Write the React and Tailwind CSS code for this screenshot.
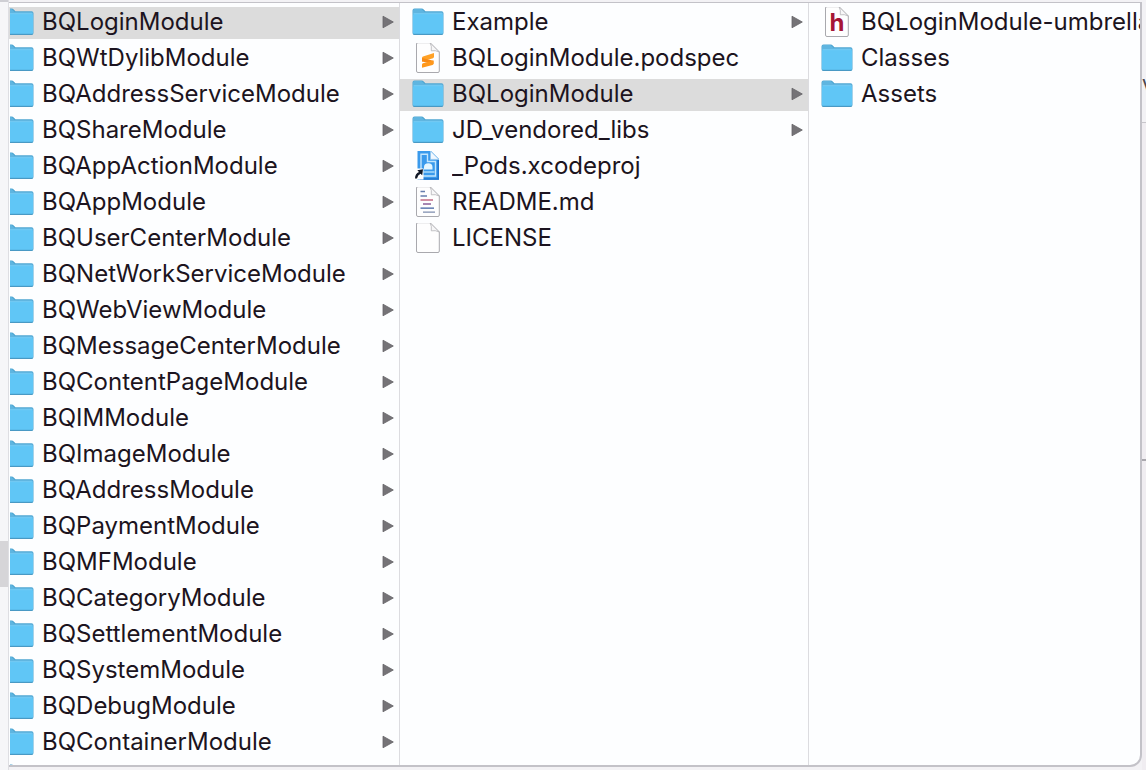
import React, { useState } from "react";

const modules = [
  "BQLoginModule",
  "BQWtDylibModule",
  "BQAddressServiceModule",
  "BQShareModule",
  "BQAppActionModule",
  "BQAppModule",
  "BQUserCenterModule",
  "BQNetWorkServiceModule",
  "BQWebViewModule",
  "BQMessageCenterModule",
  "BQContentPageModule",
  "BQIMModule",
  "BQImageModule",
  "BQAddressModule",
  "BQPaymentModule",
  "BQMFModule",
  "BQCategoryModule",
  "BQSettlementModule",
  "BQSystemModule",
  "BQDebugModule",
  "BQContainerModule",
].map((name) => ({ name, kind: "folder", open: true }));

const contents = [
  { name: "Example", kind: "folder", open: true },
  { name: "BQLoginModule.podspec", kind: "sublime" },
  { name: "BQLoginModule", kind: "folder", open: true },
  { name: "JD_vendored_libs", kind: "folder", open: true },
  { name: "_Pods.xcodeproj", kind: "xcode" },
  { name: "README.md", kind: "text" },
  { name: "LICENSE", kind: "blank" },
];

const sources = [
  { name: "BQLoginModule-umbrella.h", kind: "header" },
  { name: "Classes", kind: "folder" },
  { name: "Assets", kind: "folder" },
];

function FolderShape() {
  return (
    <>
      <path d="M0.5 25V2.5Q0.5 0.5 2.5 0.5H9.5Q11 0.5 12 1.7L13.5 3.3H29.5Q31.5 3.3 31.5 5.3V25Q31.5 27 29.5 27H2.5Q0.5 27 0.5 25Z" fill="#4fa6d2" />
      <path d="M1 6V2.7Q1 1 2.5 1H9.5L12.5 4H29.5Q31 4 31 5.5V6Z" fill="#5fb5e0" />
      <path d="M1 7Q1 5.7 2.5 5.7H29.5Q31 5.7 31 7V24.5Q31 26 29.5 26H2.5Q1 26 1 24.5Z" fill="#60c6f6" />
      <path d="M1.5 5.7H30.5" stroke="#7bd0f7" strokeWidth="0.8" />
      <path d="M1.5 26.3H30.5" stroke="#4593bb" strokeWidth="0.8" />
    </>
  );
}

function PageShape() {
  return (
    <>
      <path d="M4.5 2Q4.5 0.7 6 0.7H18L27.3 10V29Q27.3 30.5 26 30.5H6Q4.5 30.5 4.5 29Z" fill="#fefefe" stroke="#a9a9ae" strokeWidth="1" />
      <path d="M18 0.7Q20 4 19.3 8.8Q23.5 8 27.3 10Z" fill="#f7f7f8" stroke="#b4b4b8" strokeWidth="0.8" />
    </>
  );
}

function FileIcon({ kind, clipped }) {
  if (kind === "folder") {
    return (
      <svg viewBox={clipped ? "8 0 24 28" : "0 0 32 28"} className={clipped ? "h-7 w-6 shrink-0" : "h-7 w-8 shrink-0"} aria-hidden="true">
        <FolderShape />
      </svg>
    );
  }
  return (
    <svg viewBox="0 0 32 32" className="h-8 w-8 shrink-0" aria-hidden="true">
      {kind !== "xcode" && <PageShape />}
      {kind === "sublime" && (
        <>
          <path d="M10 16.2Q10 15 11 14.6L22 11V14.8Q22 15.8 21 16.2L10 19.5Z" fill="#ffa126" />
          <path d="M10 16L21.5 18.8V22L10 19.4Z" fill="#f88a14" />
          <path d="M21.5 18.6V21.4Q21.5 22.6 20.5 23L10 25.8V22.6Q10 21.6 11 21.3Z" fill="#ff981b" />
        </>
      )}
      {kind === "header" && (
        <text x="16" y="25" textAnchor="middle" fontSize="24" fontWeight="700" fill="#a51636">
          h
        </text>
      )}
      {kind === "text" && (
        <g fill="none" strokeWidth="1.3">
          <path d="M8.5 5.5H13M8.5 10H15" stroke="#667dad" />
          <path d="M8.5 14H21" stroke="#c26a85" />
          <path d="M11 18H19" stroke="#8a5f98" />
          <path d="M8.5 22.2H22" stroke="#3f5f9f" />
          <path d="M11 26.2H23" stroke="#7d8cae" />
        </g>
      )}
      {kind === "xcode" && (
        <>
          <path d="M5.5 1H19L27 9V29.8H5.5Z" fill="#3a9aec" />
          <path d="M26.2 10V29H8" fill="none" stroke="#1f74cc" strokeWidth="1.5" />
          <path d="M18.5 1L27 9.4H18.5Z" fill="#f1f8ff" stroke="#93c6ee" strokeWidth="0.8" />
          <path d="M9 4.3H15.5V11.5H23.5V26H9Z" fill="none" stroke="#c4e6fd" strokeWidth="1.4" />
          <path d="M12 19.5V17Q12 13.2 16.3 13.2Q20.5 13.2 20.5 17V19.5Z" fill="#e5f6ff" />
          <path d="M11.5 22H22.5" stroke="#a8dafb" strokeWidth="1.7" />
          <path d="M2.5 18.5H11.5V29.5H2.5Z" fill="#fff" />
          <path d="M3 28.5Q3 23.5 7 22L5.3 20.2L11 19.3L10.2 25.2L8.5 23.7Q5.8 25 5 28.5Z" fill="#111827" />
        </>
      )}
    </svg>
  );
}

function Row({ item, selected, onSelect, clipped }) {
  return (
    <li>
      <button
        type="button"
        aria-pressed={selected}
        onClick={onSelect}
        className={`flex h-8 w-full items-center gap-2 overflow-hidden pb-0.5 text-left ${clipped ? "pl-px" : "pl-3"} ${selected ? "bg-[#dcdcdc]" : ""}`}
      >
        <FileIcon kind={item.kind} clipped={clipped} />
        <span className="min-w-0 flex-1 overflow-hidden whitespace-nowrap leading-[30px]">{item.name}</span>
        {item.open && (
          <svg viewBox="0 0 12 14" className="mr-[5px] h-3.5 w-3 shrink-0" aria-hidden="true">
            <path d="M1 1.2L11.3 7L1 12.8Z" fill="#757377" stroke="#656367" strokeWidth="0.8" strokeLinejoin="round" />
          </svg>
        )}
      </button>
    </li>
  );
}

function Column({ label, items, initial, clipped, divided, children }) {
  const [active, setActive] = useState(initial);
  return (
    <ul aria-label={label} className={`flex min-w-0 flex-col gap-1 overflow-hidden pt-1 ${divided ? "border-r border-[#dcdce0]" : ""}`}>
      {items.map((item, i) => (
        <Row key={item.name} item={item} clipped={clipped} selected={active === i} onSelect={() => setActive(i)} />
      ))}
      {children}
    </ul>
  );
}

export default function App() {
  return (
    <div className="flex h-screen overflow-hidden bg-[#f3f2f5] font-[Inter,'Noto_Sans',sans-serif] text-2xl text-[#1c1420]">
      <aside className="flex w-[9px] shrink-0 flex-col border-r border-[#dedee2] bg-[#f6f6f8]">
        <div className="h-0.5 shrink-0 bg-[#cfcfd4]" />
        <div className="flex-[539]" />
        <div className="flex-[46] bg-[#d6d5d8]" />
        <div className="flex-[183]" />
      </aside>
      <div className="flex min-w-0 flex-1 flex-col">
        <main className="mt-0.5 mb-[3px] grid min-h-0 flex-1 grid-cols-[391fr_409fr_331fr] overflow-hidden rounded-br-xl border-t border-r-2 border-b-2 border-[#c3c2c8] bg-[#fdfeff]">
          <Column label="Modules" items={modules} initial={0} clipped divided>
            <li className="flex h-8 shrink-0 items-center pb-0.5 pl-px" aria-hidden="true">
              <FileIcon kind="folder" clipped />
            </li>
          </Column>
          <Column label="Module contents" items={contents} initial={2} divided />
          <Column label="Sources" items={sources} initial={-1} />
        </main>
      </div>
      <aside className="flex w-1 shrink-0 flex-col bg-[#f0edf1]" aria-hidden="true">
        <div className="flex-[75] bg-[#f3f2f5]" />
        <div className="h-6 shrink-0 overflow-hidden bg-[#f3f2f5] text-xl leading-6 text-[#4a464c]">V</div>
        <div className="flex-[23] bg-[#f3f2f5]" />
        <div className="flex-[338] border-t border-[#c8c6cb]" />
        <div className="flex-[310] border-t-2 border-[#aaa8ae]" />
      </aside>
    </div>
  );
}
